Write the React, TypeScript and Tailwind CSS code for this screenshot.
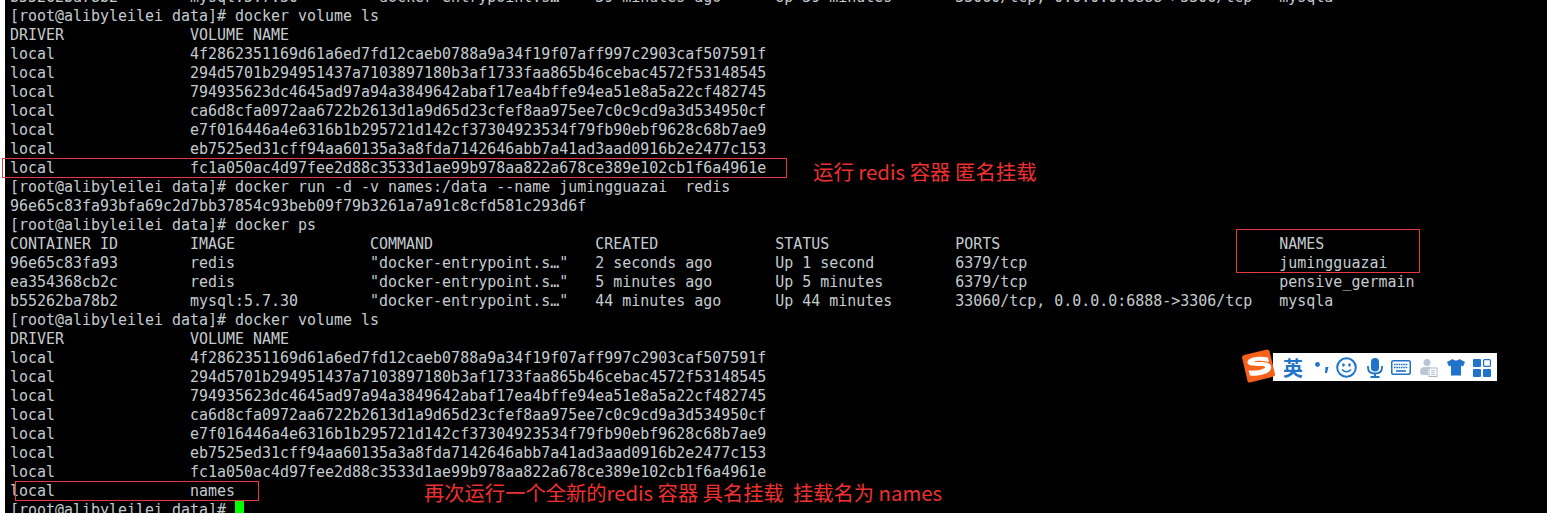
import React from 'react';

const hashes = [
  '4f2862351169d61a6ed7fd12caeb0788a9a34f19f07aff997c2903caf507591f',
  '294d5701b294951437a7103897180b3af1733faa865b46cebac4572f53148545',
  '794935623dc4645ad97a94a3849642abaf17ea4bffe94ea51e8a5a22cf482745',
  'ca6d8cfa0972aa6722b2613d1a9d65d23cfef8aa975ee7c0c9cd9a3d534950cf',
  'e7f016446a4e6316b1b295721d142cf37304923534f79fb90ebf9628c68b7ae9',
  'eb7525ed31cff94aa60135a3a8fda7142646abb7a41ad3aad0916b2e2477c153',
  'fc1a050ac4d97fee2d88c3533d1ae99b978aa822a678ce389e102cb1f6a4961e',
];

const row = (cells: string[], widths: number[]) =>
  cells.map((c, i) => (widths[i] ? c.padEnd(widths[i]) : c)).join('');

const ps = [20, 20, 25, 20, 20, 36, 0];

const volumes = hashes.map((h) => row(['local', h], [20, 0]));

const lines = [
  row(['b55262ba78b2', 'mysql:5.7.30', '"docker-entrypoint.s…"', '39 minutes ago', 'Up 39 minutes', '33060/tcp, 0.0.0.0:6888->3306/tcp', 'mysqla'], ps),
  '[root@alibyleilei data]# docker volume ls',
  row(['DRIVER', 'VOLUME NAME'], [20, 0]),
  ...volumes,
  '[root@alibyleilei data]# docker run -d -v names:/data --name jumingguazai  redis',
  '96e65c83fa93bfa69c2d7bb37854c93beb09f79b3261a7a91c8cfd581c293d6f',
  '[root@alibyleilei data]# docker ps',
  row(['CONTAINER ID', 'IMAGE', 'COMMAND', 'CREATED', 'STATUS', 'PORTS', 'NAMES'], ps),
  row(['96e65c83fa93', 'redis', '"docker-entrypoint.s…"', '2 seconds ago', 'Up 1 second', '6379/tcp', 'jumingguazai'], ps),
  row(['ea354368cb2c', 'redis', '"docker-entrypoint.s…"', '5 minutes ago', 'Up 5 minutes', '6379/tcp', 'pensive_germain'], ps),
  row(['b55262ba78b2', 'mysql:5.7.30', '"docker-entrypoint.s…"', '44 minutes ago', 'Up 44 minutes', '33060/tcp, 0.0.0.0:6888->3306/tcp', 'mysqla'], ps),
  '[root@alibyleilei data]# docker volume ls',
  row(['DRIVER', 'VOLUME NAME'], [20, 0]),
  ...volumes,
  row(['local', 'names'], [20, 0]),
];

const SogouBar = () => (
  <div className="absolute left-[1241px] top-[349px] flex h-[35px] items-center">
    <svg className="relative z-10 shrink-0" width="36" height="35" viewBox="0 0 36 35">
      <path d="M3 6 L26 0.5 Q28 0.5 28.5 2 L34 25 Q34.5 27 32.5 27.5 L9 33.5 Q7 34 6.500 32 L1 8.500 Q1 6.500 3 6 Z" fill="#f4611a" />
      <path d="M27 8.500 C20 7 8 8 6.500 12.500 C5.500 17 12 17 19 17 C23 17 25 17.500 23.500 19 C21.500 21 14 22 7.500 21.500 L9 26.500 C16 27.500 28 25.500 30 20 C31.500 14.500 26 13 19 13 C15 13 12.500 13 13.500 12.300 C15 11.500 21 11.500 28 13 Z" fill="#fff" />
    </svg>
    <div className="-ml-[4px] flex h-[28px] w-[224px] items-center gap-[9px] bg-white pl-[10px] pt-[2px]">
      <span className="w-[20px] font-['Noto_Sans_CJK_SC',sans-serif] text-[20px] leading-[22px] font-bold text-[#1f73c8]">英</span>
      <svg className="ml-[2px] shrink-0" width="16" height="15" viewBox="0 0 16 15">
        <circle cx="3.500" cy="4.500" r="2.400" fill="#1f73c8" />
        <path d="M11.500 7 L14.500 7 L13 13 L11 13 Z" fill="#1f73c8" />
      </svg>
      <svg className="-ml-[3px] shrink-0" width="21" height="21" viewBox="0 0 21 21">
        <circle cx="10.500" cy="10.500" r="9.300" fill="none" stroke="#1f73c8" strokeWidth="2" />
        <ellipse cx="7.500" cy="8" rx="1.300" ry="1.800" fill="#1f73c8" />
        <ellipse cx="13.500" cy="8" rx="1.300" ry="1.800" fill="#1f73c8" />
        <path d="M6 12.500 Q10.500 17 15 12.500" fill="none" stroke="#1f73c8" strokeWidth="1.600" />
      </svg>
      <svg className="ml-[1px] shrink-0" width="16" height="20" viewBox="0 0 16 20">
        <rect x="4" y="0" width="8" height="13.500" rx="4" fill="#1f73c8" />
        <path d="M1 8 V9.500 Q1 15.500 8 15.500 Q15 15.500 15 9.500 V8" fill="none" stroke="#1f73c8" strokeWidth="1.800" />
        <path d="M8 15 V19 M3.500 19 H12.500" stroke="#1f73c8" strokeWidth="2" />
      </svg>
      <svg className="-ml-[1px] shrink-0" width="20" height="15" viewBox="0 0 20 15">
        <rect x="0" y="0" width="20" height="15" rx="2.500" fill="#1f73c8" />
        <rect x="1.500" y="1.500" width="17" height="12" rx="1" fill="#fff" />
        <path d="M3 4.500 H17 M3 7.500 H17" stroke="#1f73c8" strokeWidth="1.500" strokeDasharray="1.600 0.700" />
        <path d="M5 11 H15" stroke="#1f73c8" strokeWidth="1.600" />
      </svg>
      <svg className="shrink-0" width="18" height="18" viewBox="0 0 18 18">
        <circle cx="7" cy="3.500" r="3.500" fill="#b9c6d8" />
        <path d="M0 13 Q0 8 5 8 L9 8 Q10 8 10 9 L8 10 L8 16 L3 16 Q0 16 0 13 Z" fill="#b9c6d8" />
        <rect x="9" y="9" width="8" height="8.500" fill="#fff" stroke="#9fb0c6" strokeWidth="0.900" />
        <path d="M11 11.500 H15 M11 13.500 H15 M11 15.500 H15" stroke="#9fb0c6" strokeWidth="0.800" />
      </svg>
      <svg className="shrink-0" width="18" height="17" viewBox="0 0 18 17">
        <path d="M5.500 0 Q9 3 12.500 0 L18 3 L16 7.500 L14 6.500 L14 16.500 L4 16.500 L4 6.500 L2 7.500 L0 3 Z" fill="#1f73c8" />
      </svg>
      <svg className="-ml-[1px] shrink-0" width="18" height="18" viewBox="0 0 18 18">
        <rect x="0" y="0" width="8" height="8" rx="1" fill="#1f73c8" />
        <rect x="10.600" y="0.600" width="6.800" height="6.800" rx="1" fill="none" stroke="#1f73c8" strokeWidth="1.200" />
        <rect x="0" y="10" width="8" height="8" rx="1" fill="#1f73c8" />
        <rect x="10" y="10" width="8" height="8" rx="1" fill="#1f73c8" />
      </svg>
    </div>
  </div>
);

export default function App() {
  return (
    <div className="relative flex h-[513px] w-[1547px] overflow-hidden bg-black">
      <div className="w-[5px] shrink-0 bg-white" />
      <div className="-mt-[12px] pl-[5px] font-['DejaVu_Sans_Mono',monospace] text-[14.96px] text-[#c4ccd0]">
        {lines.map((line, i) => (
          <div key={i} className="h-[19px] whitespace-pre leading-[19px]">
            {line}
          </div>
        ))}
        <div className="flex h-[19px] whitespace-pre leading-[19px]">
          <span>[root@alibyleilei data]# </span>
          <span className="h-[14px] w-[9px] bg-[#00ff00]" />
        </div>
      </div>

      {/* red annotations drawn over the terminal */}
      <div className="absolute left-[2px] top-[158px] h-[20px] w-[785px] border border-[#e8383b]" />
      <div className="absolute left-[1236px] top-[229px] h-[44px] w-[184px] border border-[#e8383b]" />
      <div className="absolute left-[15px] top-[481px] h-[20px] w-[244px] border border-[#e8383b]" />

      <span className="absolute left-[813px] top-[158px] whitespace-pre font-['Noto_Sans_CJK_SC',sans-serif] text-[20.4px] leading-[26px] text-[#f03030]">
        运行 redis 容器 匿名挂载
      </span>
      <span className="absolute left-[424px] top-[479px] whitespace-pre font-['Noto_Sans_CJK_SC',sans-serif] text-[20.3px] leading-[26px] text-[#f03030]">
        再次运行一个全新的redis 容器 具名挂载  挂载名为 names
      </span>

      <SogouBar />
    </div>
  );
}
